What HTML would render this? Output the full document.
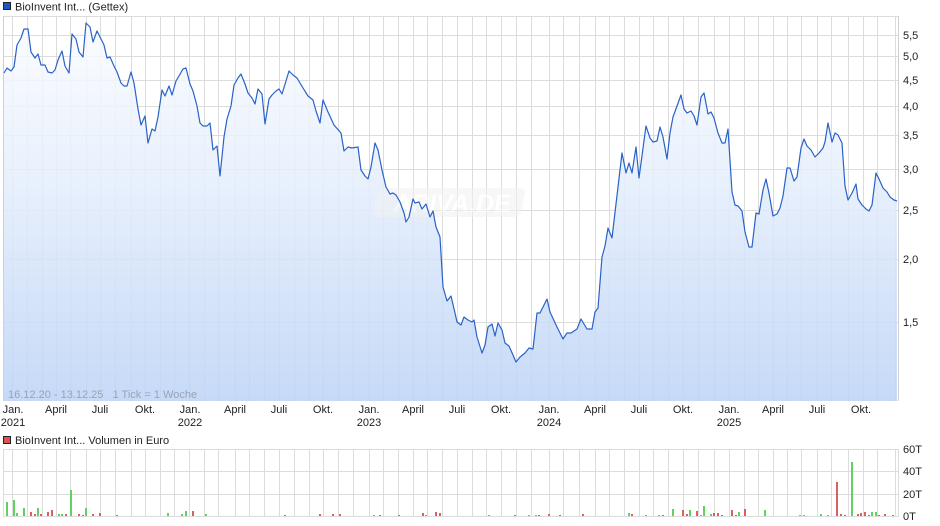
<!DOCTYPE html>
<html><head><meta charset="utf-8"><style>
html,body{margin:0;padding:0;background:#fff;}
svg{display:block;font-family:"Liberation Sans",sans-serif;}
</style></head><body>
<svg width="940" height="526" viewBox="0 0 940 526" xmlns="http://www.w3.org/2000/svg">
<defs>
<linearGradient id="g" x1="0" y1="16" x2="0" y2="401" gradientUnits="userSpaceOnUse">
<stop offset="0" stop-color="#fbfcff"/>
<stop offset="0.4" stop-color="#e6effc"/>
<stop offset="1" stop-color="#bcd3f6"/>
</linearGradient>
</defs>
<rect x="3.5" y="2.5" width="7" height="7" fill="#1d57c4" stroke="#222" stroke-width="1"/>
<text x="15" y="10.5" font-size="11" fill="#222">BioInvent Int... (Gettex)</text>

<g stroke="#dcdcdc" stroke-width="1" fill="none">
<path d="M3 16.5H898M3 35.5H898M3 56.5H898M3 80.5H898M3 106.5H898M3 135.5H898M3 169.5H898M3 210.5H898M3 259.5H898M3 322.5H898"/>
<path d="M12.5 16V401M27.5 16V401M42.5 16V401M56.5 16V401M70.5 16V401M86.5 16V401M100.5 16V401M115.5 16V401M131.5 16V401M145.5 16V401M160.5 16V401M174.5 16V401M189.5 16V401M204.5 16V401M218.5 16V401M235.5 16V401M249.5 16V401M264.5 16V401M279.5 16V401M294.5 16V401M309.5 16V401M323.5 16V401M338.5 16V401M353.5 16V401M369.5 16V401M383.5 16V401M398.5 16V401M413.5 16V401M427.5 16V401M442.5 16V401M457.5 16V401M472.5 16V401M486.5 16V401M501.5 16V401M516.5 16V401M531.5 16V401M549.5 16V401M563.5 16V401M579.5 16V401M595.5 16V401M609.5 16V401M624.5 16V401M639.5 16V401M653.5 16V401M668.5 16V401M683.5 16V401M698.5 16V401M714.5 16V401M729.5 16V401M744.5 16V401M758.5 16V401M773.5 16V401M787.5 16V401M801.5 16V401M817.5 16V401M831.5 16V401M848.5 16V401M863.5 16V401M877.5 16V401M895.5 16V401"/>
<path d="M3.5 16V401M898.5 16V401" stroke="#d0d0d0"/>
</g>

<polygon fill="url(#g)" fill-opacity="0.85" points="4,401 4,73 7,68 11,71 14,67 17,45 21,38 24,29 28,29 31,52 35,58 38,54 41,65 45,65 48,72 52,73 55,70 58,60 62,51 65,66 69,73 72,34 76,39 79,52 83,57 86,23 90,27 93,42 97,31 100,37 104,45 107,58 110,57 114,66 117,72 121,83 124,86 127,86 131,72 134,83 138,109 141,125 145,116 148,143 152,129 155,131 158,117 162,90 165,96 169,86 172,95 176,81 179,76 183,69 186,68 190,84 193,91 197,106 200,123 203,126 207,126 210,123 213,150 217,146 220,176 224,137 227,119 231,106 234,85 238,78 241,74 245,84 248,93 252,98 255,104 258,89 262,94 265,124 269,99 272,95 276,91 279,89 282,94 286,81 289,71 293,75 297,78 303,88 308,96 313,100 316,111 320,123 323,100 328,112 334,125 341,133 344,151 348,147 352,148 358,147 361,170 365,176 368,179 371,167 375,143 378,150 382,170 386,187 390,194 393,193 396,195 400,202 404,213 406,222 409,217 413,199 415,203 419,202 422,209 426,204 430,217 433,211 436,227 440,237 443,287 447,301 451,296 455,313 457,322 461,325 464,317 468,320 472,322 474,320 477,337 482,353 485,345 488,327 492,324 495,336 498,323 502,330 505,343 509,346 513,355 516,362 520,357 525,353 529,348 533,349 537,313 540,313 547,299 550,312 557,327 563,339 567,333 571,333 577,329 581,319 587,329 592,329 595,312 598,308 602,257 605,246 608,228 612,238 622,153 626,173 629,163 632,173 636,147 639,178 646,126 650,138 653,142 657,141 660,127 663,137 667,159 670,133 673,117 677,106 681,95 684,109 687,113 691,111 694,116 697,125 701,97 704,93 708,114 711,112 714,118 718,133 722,143 725,143 728,129 732,192 735,205 738,206 742,211 745,232 749,247 752,247 756,213 759,214 763,190 766,179 769,193 773,216 777,214 780,208 783,196 787,168 790,168 794,181 797,177 801,148 804,139 807,146 811,150 815,157 819,153 823,148 825,142 828,123 832,142 835,133 838,135 842,143 845,186 848,200 852,193 856,184 858,199 862,205 866,209 869,211 872,205 876,173 879,179 883,188 887,192 890,197 894,200 897,201 897,401"/>

<g opacity="0.55">
<rect x="378" y="188" width="148" height="29" rx="6" fill="#f2f2f2" transform="skewX(-12) translate(40,0)"/>
<text x="452" y="212" font-size="25" font-weight="bold" font-style="italic" fill="#ffffff" text-anchor="middle">ARIVA.DE</text>
</g>

<polyline fill="none" stroke="#2a62c8" stroke-width="1.2" stroke-linejoin="round" points="4,73 7,68 11,71 14,67 17,45 21,38 24,29 28,29 31,52 35,58 38,54 41,65 45,65 48,72 52,73 55,70 58,60 62,51 65,66 69,73 72,34 76,39 79,52 83,57 86,23 90,27 93,42 97,31 100,37 104,45 107,58 110,57 114,66 117,72 121,83 124,86 127,86 131,72 134,83 138,109 141,125 145,116 148,143 152,129 155,131 158,117 162,90 165,96 169,86 172,95 176,81 179,76 183,69 186,68 190,84 193,91 197,106 200,123 203,126 207,126 210,123 213,150 217,146 220,176 224,137 227,119 231,106 234,85 238,78 241,74 245,84 248,93 252,98 255,104 258,89 262,94 265,124 269,99 272,95 276,91 279,89 282,94 286,81 289,71 293,75 297,78 303,88 308,96 313,100 316,111 320,123 323,100 328,112 334,125 341,133 344,151 348,147 352,148 358,147 361,170 365,176 368,179 371,167 375,143 378,150 382,170 386,187 390,194 393,193 396,195 400,202 404,213 406,222 409,217 413,199 415,203 419,202 422,209 426,204 430,217 433,211 436,227 440,237 443,287 447,301 451,296 455,313 457,322 461,325 464,317 468,320 472,322 474,320 477,337 482,353 485,345 488,327 492,324 495,336 498,323 502,330 505,343 509,346 513,355 516,362 520,357 525,353 529,348 533,349 537,313 540,313 547,299 550,312 557,327 563,339 567,333 571,333 577,329 581,319 587,329 592,329 595,312 598,308 602,257 605,246 608,228 612,238 622,153 626,173 629,163 632,173 636,147 639,178 646,126 650,138 653,142 657,141 660,127 663,137 667,159 670,133 673,117 677,106 681,95 684,109 687,113 691,111 694,116 697,125 701,97 704,93 708,114 711,112 714,118 718,133 722,143 725,143 728,129 732,192 735,205 738,206 742,211 745,232 749,247 752,247 756,213 759,214 763,190 766,179 769,193 773,216 777,214 780,208 783,196 787,168 790,168 794,181 797,177 801,148 804,139 807,146 811,150 815,157 819,153 823,148 825,142 828,123 832,142 835,133 838,135 842,143 845,186 848,200 852,193 856,184 858,199 862,205 866,209 869,211 872,205 876,173 879,179 883,188 887,192 890,197 894,200 897,201"/>

<text x="8" y="398" font-size="11" fill="#9aa3b3">16.12.20 - 13.12.25&#160;&#160;&#160;1 Tick = 1 Woche</text>

<g font-size="11" fill="#222">
<text x="903" y="39">5,5</text><text x="903" y="60">5,0</text><text x="903" y="84">4,5</text>
<text x="903" y="110">4,0</text><text x="903" y="139">3,5</text><text x="903" y="173">3,0</text>
<text x="903" y="214">2,5</text><text x="903" y="263">2,0</text><text x="903" y="326">1,5</text>
</g>
<g font-size="11" fill="#222" text-anchor="middle">
<text x="13" y="413">Jan.</text><text x="13" y="426">2021</text>
<text x="56" y="413">April</text><text x="100" y="413">Juli</text><text x="145" y="413">Okt.</text>
<text x="190" y="413">Jan.</text><text x="190" y="426">2022</text>
<text x="235" y="413">April</text><text x="279" y="413">Juli</text><text x="323" y="413">Okt.</text>
<text x="369" y="413">Jan.</text><text x="369" y="426">2023</text>
<text x="413" y="413">April</text><text x="457" y="413">Juli</text><text x="501" y="413">Okt.</text>
<text x="549" y="413">Jan.</text><text x="549" y="426">2024</text>
<text x="595" y="413">April</text><text x="639" y="413">Juli</text><text x="683" y="413">Okt.</text>
<text x="729" y="413">Jan.</text><text x="729" y="426">2025</text>
<text x="773" y="413">April</text><text x="817" y="413">Juli</text><text x="861" y="413">Okt.</text>
</g>

<rect x="3.5" y="436.5" width="7" height="7" fill="#d9534f" stroke="#222" stroke-width="1"/>
<text x="15" y="444" font-size="11" fill="#222">BioInvent Int... Volumen in Euro</text>

<g stroke="#dcdcdc" stroke-width="1" fill="none">
<path d="M3 449.5H898M3 471.5H898M3 494.5H898M3 516.5H898"/>
<path d="M12.5 449V517M27.5 449V517M42.5 449V517M56.5 449V517M70.5 449V517M86.5 449V517M100.5 449V517M115.5 449V517M131.5 449V517M145.5 449V517M160.5 449V517M174.5 449V517M189.5 449V517M204.5 449V517M218.5 449V517M235.5 449V517M249.5 449V517M264.5 449V517M279.5 449V517M294.5 449V517M309.5 449V517M323.5 449V517M338.5 449V517M353.5 449V517M369.5 449V517M383.5 449V517M398.5 449V517M413.5 449V517M427.5 449V517M442.5 449V517M457.5 449V517M472.5 449V517M486.5 449V517M501.5 449V517M516.5 449V517M531.5 449V517M549.5 449V517M563.5 449V517M579.5 449V517M595.5 449V517M609.5 449V517M624.5 449V517M639.5 449V517M653.5 449V517M668.5 449V517M683.5 449V517M698.5 449V517M714.5 449V517M729.5 449V517M744.5 449V517M758.5 449V517M773.5 449V517M787.5 449V517M801.5 449V517M817.5 449V517M831.5 449V517M848.5 449V517M863.5 449V517M877.5 449V517M895.5 449V517"/>
<path d="M3.5 449V517M898.5 449V517"/>
</g>
<g fill="#5fd35f">
<rect x="6" y="502" width="2" height="14"/><rect x="13" y="500" width="2" height="16"/><rect x="16" y="513" width="2" height="3"/>
<rect x="23" y="508" width="2" height="8"/><rect x="37" y="508" width="2" height="8"/><rect x="58" y="514" width="2" height="2"/>
<rect x="61" y="514" width="2" height="2"/><rect x="70" y="490" width="2" height="26"/><rect x="85" y="508" width="2" height="8"/>
<rect x="167" y="513" width="2" height="3"/><rect x="181" y="514" width="2" height="2"/><rect x="185" y="511" width="2" height="5"/>
<rect x="205" y="514" width="2" height="2"/><rect x="373" y="515" width="2" height="1"/><rect x="425" y="515" width="2" height="1"/>
<rect x="488" y="515" width="2" height="1"/><rect x="528" y="515" width="2" height="1"/><rect x="535" y="515" width="2" height="1"/>
<rect x="628" y="513" width="2" height="3"/><rect x="645" y="515" width="2" height="1"/><rect x="658" y="515" width="2" height="1"/>
<rect x="672" y="509" width="2" height="7"/><rect x="689" y="510" width="2" height="6"/><rect x="700" y="515" width="2" height="1"/>
<rect x="703" y="506" width="2" height="10"/><rect x="710" y="514" width="2" height="2"/><rect x="738" y="512" width="2" height="4"/>
<rect x="764" y="510" width="2" height="6"/><rect x="799" y="515" width="2" height="1"/><rect x="803" y="515" width="2" height="1"/>
<rect x="820" y="514" width="2" height="2"/><rect x="827" y="515" width="2" height="1"/><rect x="851" y="462" width="2" height="54"/>
<rect x="871" y="512" width="2" height="4"/><rect x="875" y="512" width="2" height="4"/>
</g>
<g fill="#d9625e">
<rect x="30" y="512" width="2" height="4"/><rect x="34" y="514" width="2" height="2"/><rect x="40" y="514" width="2" height="2"/>
<rect x="47" y="512" width="2" height="4"/><rect x="51" y="510" width="2" height="6"/><rect x="65" y="514" width="2" height="2"/>
<rect x="78" y="514" width="2" height="2"/><rect x="82" y="515" width="2" height="1"/><rect x="92" y="514" width="2" height="2"/>
<rect x="99" y="513" width="2" height="3"/><rect x="116" y="515" width="2" height="1"/><rect x="192" y="511" width="2" height="5"/>
<rect x="284" y="515" width="2" height="1"/><rect x="319" y="514" width="2" height="2"/><rect x="332" y="514" width="2" height="2"/>
<rect x="339" y="514" width="2" height="2"/><rect x="379" y="515" width="2" height="1"/><rect x="398" y="515" width="2" height="1"/>
<rect x="422" y="513" width="2" height="3"/><rect x="435" y="512" width="2" height="4"/><rect x="439" y="513" width="2" height="3"/>
<rect x="514" y="515" width="2" height="1"/><rect x="538" y="515" width="2" height="1"/><rect x="548" y="514" width="2" height="2"/>
<rect x="559" y="515" width="2" height="1"/><rect x="582" y="514" width="2" height="2"/><rect x="631" y="514" width="2" height="2"/>
<rect x="662" y="515" width="2" height="1"/><rect x="682" y="510" width="2" height="6"/><rect x="686" y="514" width="2" height="2"/>
<rect x="696" y="511" width="2" height="5"/><rect x="713" y="513" width="2" height="3"/><rect x="717" y="513" width="2" height="3"/>
<rect x="721" y="515" width="2" height="1"/><rect x="731" y="510" width="2" height="6"/><rect x="735" y="515" width="2" height="1"/>
<rect x="744" y="509" width="2" height="7"/><rect x="836" y="482" width="2" height="34"/><rect x="840" y="514" width="2" height="2"/>
<rect x="844" y="515" width="2" height="1"/><rect x="857" y="514" width="2" height="2"/><rect x="860" y="513" width="2" height="3"/>
<rect x="864" y="512" width="2" height="4"/><rect x="868" y="515" width="2" height="1"/><rect x="878" y="515" width="2" height="1"/>
<rect x="884" y="514" width="2" height="2"/><rect x="892" y="515" width="2" height="1"/>
</g>
<g font-size="11" fill="#222">
<text x="903" y="453">60T</text><text x="903" y="475">40T</text><text x="903" y="498">20T</text><text x="903" y="520">0T</text>
</g>
</svg>
</body></html>
